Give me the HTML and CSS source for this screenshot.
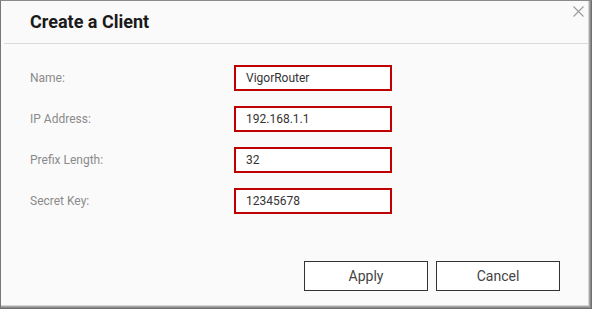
FILE: index.html
```html
<!DOCTYPE html>
<html>
<head>
<meta charset="utf-8">
<link rel="stylesheet" href="styles.css">
</head>
<body>
<div class="dialog">
  <div class="header">
    <h1 class="title">Create a Client</h1>
    <span class="close" aria-label="Close">
      <svg width="11" height="11" viewBox="0 0 11 11"><path d="M0.5 0.5 L10.5 10.5 M10.5 0.5 L0.5 10.5" stroke="#9a9a9a" stroke-width="1.1" fill="none"/></svg>
    </span>
  </div>
  <div class="form">
    <div class="row"><label class="label">Name:</label><div class="field">VigorRouter</div></div>
    <div class="row"><label class="label">IP Address:</label><div class="field">192.168.1.1</div></div>
    <div class="row"><label class="label">Prefix Length:</label><div class="field">32</div></div>
    <div class="row"><label class="label">Secret Key:</label><div class="field">12345678</div></div>
  </div>
  <div class="footer">
    <button class="btn">Apply</button>
    <button class="btn">Cancel</button>
  </div>
</div>
</body>
</html>
```
FILE: styles.css
```css
html, body {
  margin: 0;
  padding: 0;
  background: #fafafa;
}
body {
  font-family: Roboto, "Liberation Sans", sans-serif;
}
.dialog {
  position: relative;
  width: 592px;
  height: 309px;
  box-sizing: border-box;
  background: #fafafa;
  border-left: 1px solid #777;
  border-top: 1px solid #8a8a8a;
  border-right: 1px solid #6f6f6f;
  border-bottom: 1px solid #6f6f6f;
  box-shadow: inset -1px -1px 0 #8a8a8a, inset -2px -2px 0 #a8a8a8, inset -3px -3px 0 #d4d4d4;
  display: flex;
  flex-direction: column;
}
.header {
  height: 42px;
  margin: 0 3px 0 3px;
  border-bottom: 1px solid #dcdcdc;
  display: flex;
  align-items: flex-start;
}
.title {
  margin: 10px 0 0 26px;
  font-size: 18px;
  font-weight: 700;
  color: #1a1a1a;
  line-height: 22px;
}
.close {
  position: absolute;
  top: 5px;
  right: 7px;
  width: 11px;
  height: 11px;
  display: block;
  line-height: 0;
}
.form {
  padding: 21px 0 0 29px;
  display: flex;
  flex-direction: column;
  gap: 15px;
}
.row {
  display: flex;
  align-items: center;
  height: 26px;
}
.label {
  width: 204px;
  font-size: 12px;
  color: #8a8a8a;
}
.field {
  box-sizing: border-box;
  width: 158px;
  height: 26px;
  border: 2px solid #c00000;
  background: #fff;
  padding-left: 10px;
  font-size: 12px;
  color: #333;
  line-height: 22px;
}
.footer {
  margin-top: auto;
  padding: 0 31px 17px 0;
  display: flex;
  justify-content: flex-end;
  gap: 8px;
}
.btn {
  width: 124px;
  height: 30px;
  border: 1px solid #333;
  background: #fff;
  font-family: Roboto, "Liberation Sans", sans-serif;
  font-size: 14px;
  color: #444;
  padding: 0;
}
```
